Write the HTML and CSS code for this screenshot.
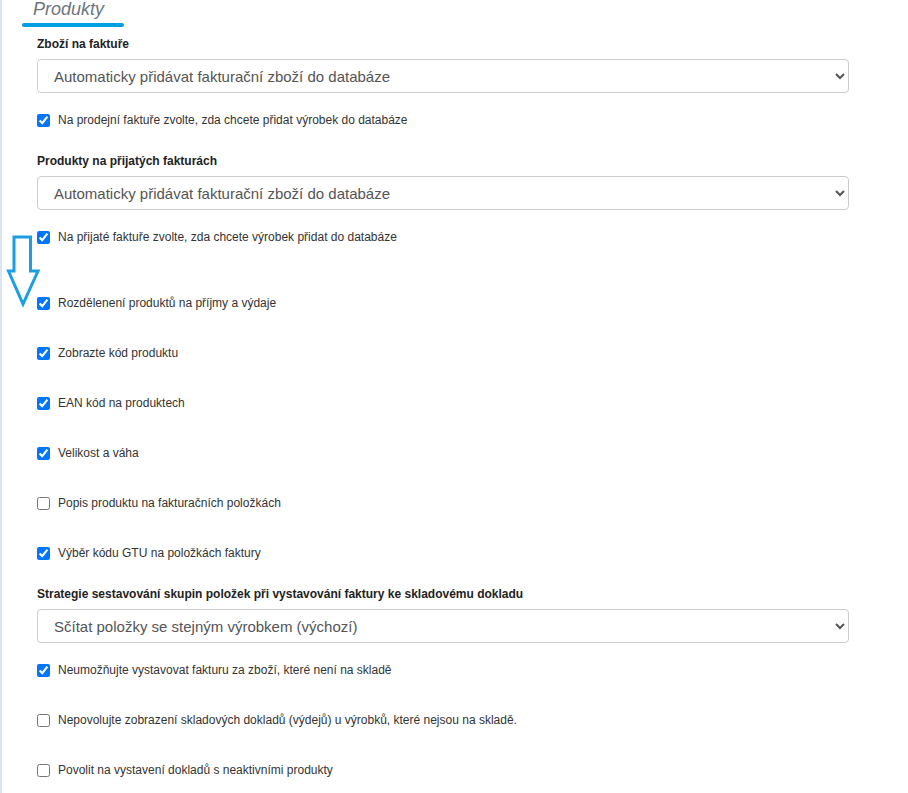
FILE: index.html
```html
<!DOCTYPE html>
<html lang="cs">
<head>
<meta charset="utf-8">
<title>Produkty</title>
<link rel="stylesheet" href="styles.css">
</head>
<body>
<div class="page">
  <svg class="arrow" width="40" height="80" viewBox="0 0 40 80" xmlns="http://www.w3.org/2000/svg">
    <polygon points="14,8 30.5,8 30.5,42 38,42 23,75 8.5,42 14,42" fill="none" stroke="#1c9fe2" stroke-width="3" stroke-linejoin="miter"/>
  </svg>
  <div class="legend">Produkty</div>
  <div class="legend-line"></div>
  <div class="form">
    <div class="group group--first">
      <label class="field-label">Zboží na faktuře</label>
      <select class="select"><option>Automaticky přidávat fakturační zboží do databáze</option></select>
    </div>
    <label class="check check--after-select"><input type="checkbox" checked><span>Na prodejní faktuře zvolte, zda chcete přidat výrobek do databáze</span></label>

    <div class="group">
      <label class="field-label">Produkty na přijatých fakturách</label>
      <select class="select"><option>Automaticky přidávat fakturační zboží do databáze</option></select>
    </div>
    <label class="check check--after-select"><input type="checkbox" checked><span>Na přijaté faktuře zvolte, zda chcete výrobek přidat do databáze</span></label>

    <label class="check check--section"><input type="checkbox" checked><span>Rozdělenení produktů na příjmy a výdaje</span></label>
    <label class="check check--spaced"><input type="checkbox" checked><span>Zobrazte kód produktu</span></label>
    <label class="check check--spaced"><input type="checkbox" checked><span>EAN kód na produktech</span></label>
    <label class="check check--spaced"><input type="checkbox" checked><span>Velikost a váha</span></label>
    <label class="check check--spaced"><input type="checkbox"><span>Popis produktu na fakturačních položkách</span></label>
    <label class="check check--spaced"><input type="checkbox" checked><span>Výběr kódu GTU na položkách faktury</span></label>

    <div class="group">
      <label class="field-label">Strategie sestavování skupin položek při vystavování faktury ke skladovému dokladu</label>
      <select class="select"><option>Sčítat položky se stejným výrobkem (výchozí)</option></select>
    </div>
    <label class="check check--after-select"><input type="checkbox" checked><span>Neumožňujte vystavovat fakturu za zboží, které není na skladě</span></label>
    <label class="check check--spaced"><input type="checkbox"><span>Nepovolujte zobrazení skladových dokladů (výdejů) u výrobků, které nejsou na skladě.</span></label>
    <label class="check check--spaced"><input type="checkbox"><span>Povolit na vystavení dokladů s neaktivními produkty</span></label>
  </div>
</div>
</body>
</html>
```
FILE: styles.css
```css
html, body {
  margin: 0;
  padding: 0;
  background: #ffffff;
}

body {
  font-family: "Liberation Sans", Arial, sans-serif;
  color: #333333;
}

.page {
  position: relative;
  min-height: 793px;
  border-left: 2px solid #dde5ee;
  overflow: hidden;
}

.arrow {
  position: absolute;
  left: -2px;
  top: 229px;
}

.legend {
  padding-left: 31px;
  font-size: 18px;
  line-height: 18px;
  font-style: italic;
  color: #6c757d;
}

.legend-line {
  margin: 5px 0 0 20px;
  width: 102px;
  height: 4px;
  border-radius: 2px;
  background: #009fe3;
}

.form {
  padding-left: 35px;
  width: 812px;
}

.group {
  margin-top: 24px;
}

.group--first {
  margin-top: 10px;
}

.field-label {
  display: block;
  font-size: 12px;
  line-height: 15px;
  font-weight: bold;
  color: #222222;
  margin-bottom: 7px;
}

.select {
  display: block;
  width: 812px;
  height: 34px;
  margin: 0;
  padding: 0 12px;
  border: 1px solid #cccccc;
  border-radius: 4px;
  background-color: #ffffff;
  font-family: "Liberation Sans", Arial, sans-serif;
  font-size: 15px;
  color: #555555;
}

.check {
  display: flex;
  align-items: center;
  height: 20px;
  font-size: 12px;
  color: #333333;
}

.check input {
  width: 13px;
  height: 13px;
  margin: 0 8px 0 0;
  flex: none;
}

.check--after-select {
  margin-top: 17px;
}

.check--section {
  margin-top: 46px;
}

.check--spaced {
  margin-top: 30px;
}
```
